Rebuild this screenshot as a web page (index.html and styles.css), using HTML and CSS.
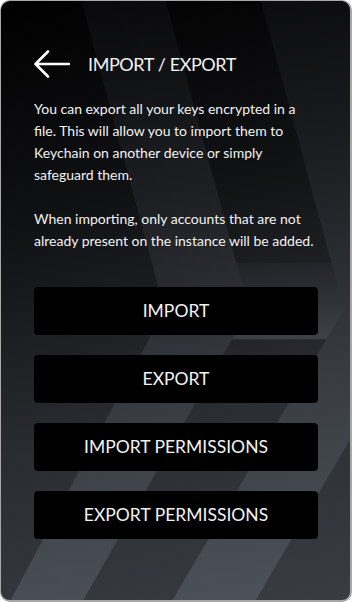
FILE: index.html
```html
<!DOCTYPE html>
<html>
<head>
  <meta charset="UTF-8">
  <title>Import / Export</title>
  <link rel="stylesheet" href="styles.css">
</head>
<body>
  <div id="app">
    <!-- decorative chevron stripes behind the content -->
    <svg class="backdrop" viewBox="0 0 352 602" preserveAspectRatio="none">
      <defs>
        <linearGradient id="stripe" x1="0" y1="0" x2="0" y2="1">
          <stop offset="0" stop-color="#8c96a6" stop-opacity="0.05"/>
          <stop offset="0.5" stop-color="#8c96a6" stop-opacity="0.12"/>
          <stop offset="1" stop-color="#8c96a6" stop-opacity="0.24"/>
        </linearGradient>
      </defs>
      <polygon class="light" points="81,0 166,0 250,310 83,602 10,602 165,310"/>
      <polygon class="light" points="262,0 560,0 429,310 257,602 173,602 346,310"/>
      <polygon class="light" points="237,263 333,263 346,310 328,340 233,340 250,310"/>
    </svg>

    <header>
      <a href="#" class="back">
        <svg width="36" height="32" viewBox="0 0 36 32">
          <path d="M35 16H2M14 3.5L1.5 16L14 28.5" fill="none" stroke="#fff" stroke-width="2.6" stroke-linecap="round" stroke-linejoin="round"/>
        </svg>
      </a>
      <h1>IMPORT / EXPORT</h1>
    </header>

    <div class="intro">
      <p>You can export all your keys encrypted in a file. This will allow you to import them to Keychain on another device or simply safeguard them.</p>
      <p>When importing, only accounts that are not already present on the instance will be added.</p>
    </div>

    <div class="actions">
      <button>IMPORT</button>
      <button>EXPORT</button>
      <button>IMPORT PERMISSIONS</button>
      <button>EXPORT PERMISSIONS</button>
    </div>
  </div>
</body>
</html>
```

FILE: styles.css
```css
* {
  box-sizing: border-box;
}

html,
body{
  margin: 0;
  height: 100%;
  background: white;
  font-family: Lato, "Open Sans", sans-serif;
}

#app{
  position: relative;
  height: 602px;
  overflow: hidden;
  border: 1px solid #a8a8a8;
  border-right-width: 2px;
  border-bottom-width: 2px;
  border-radius: 10px;
  background: linear-gradient(165deg, #000 0%, #101113 33%, #292c30 66%, #393d43 100%);
  padding: 47px 31px 0 33px;
  color: #f2f2f2;
}

.backdrop{
  position: absolute;
  top: 0;
  left: 0;
  width: 100%;
  height: 100%;
}

.backdrop .light{
  fill: url(#stripe);
}

header{
  position: relative;
  display: flex;
  align-items: center;
  height: 32px;
}

.back{
  display: block;
  width: 36px;
  height: 32px;
}

.back svg{
  display: block;
}

h1{
  margin: 0 0 0 18px;
  font-size: 18px;
  font-weight: 400;
  letter-spacing: -0.4px;
}

.intro{
  position: relative;
  margin-top: 18px;
}

.intro p{
  margin: 0 0 22px;
  font-size: 14px;
  line-height: 22px;
}

.actions{
  position: relative;
  display: flex;
  flex-direction: column;
  gap: 20px;
  margin-top: 35px;
  margin-right: 1px;
}

.actions button{
  height: 48px;
  border: 0;
  border-radius: 4px;
  background: #000;
  color: #f2f2f2;
  font-family: inherit;
  font-size: 17.5px;
  padding-bottom: 3px;
  cursor: pointer;
}
```
